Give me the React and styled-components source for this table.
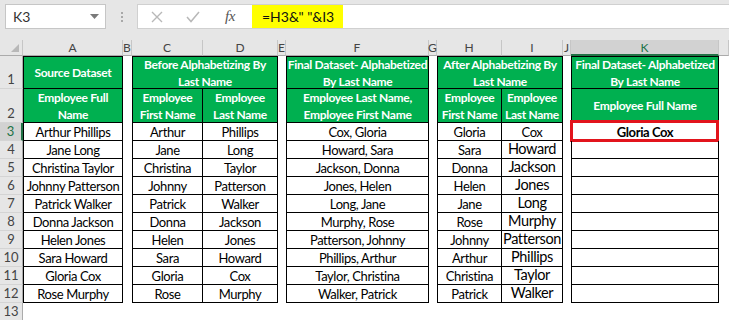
import React from 'react';
import styled, { createGlobalStyle, css } from 'styled-components';

const GREEN = '#00b050';

const GlobalStyle = createGlobalStyle`
  html, body { margin: 0; padding: 0; background: #fff; }
  body {
    width: 729px;
    height: 320px;
    overflow: hidden;
    font-family: Lato, "Open Sans", Arial, sans-serif;
  }
`;

const Toolbar = styled.div`
  height: 40px;
  box-sizing: border-box;
  background: #e6e6e6;
  display: flex;
  align-items: flex-start;
  padding: 4px 0 0 5px;
`;

const NameBox = styled.div`
  width: 101px;
  height: 25px;
  box-sizing: border-box;
  background: #fff;
  border: 1px solid #c6c6c6;
  display: flex;
  align-items: center;
  justify-content: space-between;
  padding: 0 6px 0 7px;
  font-size: 14px;
  color: #333;
`;

const Dots = styled.div`
  width: 31px;
  height: 25px;
  display: flex;
  flex-direction: column;
  align-items: center;
  justify-content: center;
  gap: 2px;
  span {
    width: 2px;
    height: 2px;
    background: #a8a8a8;
  }
`;

const FormulaBox = styled.div`
  flex: 1;
  height: 25px;
  box-sizing: border-box;
  background: #fff;
  border: 1px solid #d0d0d0;
  border-right: none;
  display: flex;
  align-items: flex-start;
`;

const IconArea = styled.div`
  width: 114px;
  height: 23px;
  display: flex;
  align-items: center;
  padding-left: 10px;
  box-sizing: border-box;
`;

const IconSlot = styled.div`
  width: ${p => p.$w}px;
  display: flex;
  align-items: center;
  justify-content: center;
`;

const Fx = styled.span`
  font-family: "Liberation Serif", serif;
  font-style: italic;
  font-size: 15px;
  color: #555;
  letter-spacing: -0.5px;
`;

const Formula = styled.div`
  width: 91px;
  height: 23px;
  background: #ffff00;
  display: flex;
  align-items: center;
  padding-left: 10px;
  box-sizing: border-box;
  font-size: 14px;
  color: #111;
  white-space: pre;
`;

const Sheet = styled.div`
  display: grid;
  grid-template-columns: 23px 100px 9px 71px 75px 8px 143px 8px 65px 61px 8px 148px 1fr;
  grid-template-rows: 16px 33px 34px repeat(11, 18px);
`;

const Corner = styled.div`
  grid-column: 1;
  grid-row: 1;
  background: #e6e6e6;
  border-right: 1px solid #c6c6c6;
  border-bottom: 1px solid #ababab;
  box-sizing: border-box;
  display: flex;
  align-items: flex-end;
  justify-content: flex-end;
  padding: 0 3px 3px 0;
`;

const ColHead = styled.div`
  grid-column: ${p => p.$col};
  grid-row: 1;
  box-sizing: border-box;
  background: ${p => (p.$active ? '#d2d2d2' : '#e6e6e6')};
  border-right: 1px solid #c6c6c6;
  border-bottom: ${p => (p.$active ? `2px solid #217346` : '1px solid #ababab')};
  color: ${p => (p.$active ? '#217346' : '#444')};
  font-size: 12px;
  display: flex;
  align-items: center;
  justify-content: center;
  line-height: 1;
  padding-top: 1px;
`;

const RowHead = styled.div`
  grid-column: 1;
  grid-row: ${p => p.$row};
  box-sizing: border-box;
  background: ${p => (p.$active ? '#d2d2d2' : '#e6e6e6')};
  border-right: ${p => (p.$active ? `2px solid #217346` : '1px solid #ababab')};
  border-bottom: 1px solid #d4d4d4;
  color: ${p => (p.$active ? '#217346' : '#444')};
  font-size: 13px;
  display: flex;
  align-items: flex-end;
  justify-content: center;
  padding-bottom: 2px;
  line-height: 1;
`;

const Cell = styled.div`
  grid-column: ${p => p.$col} / span ${p => p.$span || 1};
  grid-row: ${p => p.$row};
  position: relative;
  box-sizing: border-box;
  border-right: 1px solid #000;
  border-bottom: 1px solid #000;
  ${p => p.$first && css`border-left: 1px solid #000;`}
  ${p => p.$row === 2 && css`border-top: 1px solid #000;`}
  display: flex;
  align-items: center;
  justify-content: center;
  text-align: center;
  padding-top: 1px;
  font-size: 13px;
  letter-spacing: -0.4px;
  line-height: 16px;
  color: #000;
  white-space: nowrap;
  ${p => p.$head && css`
    background: ${GREEN};
    color: #fff;
    font-weight: 700;
    font-size: 12px;
    letter-spacing: -0.3px;
    line-height: 17px;
    padding-top: 0;
    flex-direction: column;
  `}
  ${p => p.$bold && css`font-weight: 700;`}
  ${p => p.$big && css`
    font-size: 14.5px;
    align-items: flex-start;
    padding-top: 0;
    line-height: 15px;
  `}
`;

const Selection = styled.div`
  position: absolute;
  top: -3px;
  bottom: -2px;
  left: -2px;
  right: -1px;
  border: 3px solid #e2141c;
  pointer-events: none;
`;

const source = [
  ['Arthur', 'Phillips'],
  ['Jane', 'Long'],
  ['Christina', 'Taylor'],
  ['Johnny', 'Patterson'],
  ['Patrick', 'Walker'],
  ['Donna', 'Jackson'],
  ['Helen', 'Jones'],
  ['Sara', 'Howard'],
  ['Gloria', 'Cox'],
  ['Rose', 'Murphy'],
];

const sorted = [...source].sort((a, b) => a[1].localeCompare(b[1]));

const columns = [
  ['A', 2], ['B', 3], ['C', 4], ['D', 5], ['E', 6], ['F', 7],
  ['G', 8], ['H', 9], ['I', 10], ['J', 11], ['K', 12],
];

const Cross = () => (
  <svg width="12" height="12" viewBox="0 0 12 12">
    <path d="M1 1 L11 11 M11 1 L1 11" stroke="#b8b8b8" strokeWidth="1.4" fill="none" />
  </svg>
);

const Check = () => (
  <svg width="14" height="12" viewBox="0 0 14 12">
    <path d="M1 6 L5 10.5 L13 1" stroke="#b8b8b8" strokeWidth="1.5" fill="none" />
  </svg>
);

const Caret = () => (
  <svg width="9" height="5" viewBox="0 0 9 5">
    <path d="M0 0 L9 0 L4.5 5 Z" fill="#7a7a7a" />
  </svg>
);

const SelectAll = () => (
  <svg width="8" height="8" viewBox="0 0 8 8">
    <path d="M8 0 L8 8 L0 8 Z" fill="#b8b8b8" />
  </svg>
);

// header text, wrapped the way the sheet wraps it
const Head = ({ lines, ...props }) => (
  <Cell $head {...props}>
    {lines.map(l => <span key={l}>{l}</span>)}
  </Cell>
);

export default function App() {
  const rows = [];
  for (let r = 2; r <= 14; r++) rows.push(r);

  return (
    <>
      <GlobalStyle />
      <Toolbar>
        <NameBox>
          K3
          <Caret />
        </NameBox>
        <Dots><span /><span /><span /></Dots>
        <FormulaBox>
          <IconArea>
            <IconSlot $w={18}><Cross /></IconSlot>
            <IconSlot $w={54}><Check /></IconSlot>
            <IconSlot $w={20}><Fx>fx</Fx></IconSlot>
          </IconArea>
          <Formula>=H3&amp;" "&amp;I3</Formula>
        </FormulaBox>
      </Toolbar>

      <Sheet>
        <Corner><SelectAll /></Corner>
        {columns.map(([name, col]) => (
          <ColHead key={name} $col={col} $active={name === 'K'}>{name}</ColHead>
        ))}
        <ColHead $col={13} />

        {rows.map(r => (
          <RowHead key={r} $row={r} $active={r === 4}>{r - 1}</RowHead>
        ))}

        {/* Source dataset */}
        <Head $col={2} $row={2} $first lines={['Source Dataset']} />
        <Head $col={2} $row={3} $first lines={['Employee Full', 'Name']} />
        {source.map(([f, l], i) => (
          <Cell key={'a' + i} $col={2} $row={i + 4} $first>{f} {l}</Cell>
        ))}

        {/* Before alphabetizing */}
        <Head $col={4} $span={2} $row={2} $first lines={['Before Alphabetizing By', 'Last Name']} />
        <Head $col={4} $row={3} $first lines={['Employee', 'First Name']} />
        <Head $col={5} $row={3} lines={['Employee', 'Last Name']} />
        {source.map(([f, l], i) => (
          <React.Fragment key={'cd' + i}>
            <Cell $col={4} $row={i + 4} $first>{f}</Cell>
            <Cell $col={5} $row={i + 4}>{l}</Cell>
          </React.Fragment>
        ))}

        {/* Final dataset, last-first */}
        <Head $col={7} $row={2} $first lines={['Final Dataset- Alphabetized', 'By Last Name']} />
        <Head $col={7} $row={3} $first lines={['Employee Last Name,', 'Employee First Name']} />
        {sorted.map(([f, l], i) => (
          <Cell key={'f' + i} $col={7} $row={i + 4} $first>{l}, {f}</Cell>
        ))}

        {/* After alphabetizing */}
        <Head $col={9} $span={2} $row={2} $first lines={['After Alphabetizing By', 'Last Name']} />
        <Head $col={9} $row={3} $first lines={['Employee', 'First Name']} />
        <Head $col={10} $row={3} lines={['Employee', 'Last Name']} />
        {sorted.map(([f, l], i) => (
          <React.Fragment key={'hi' + i}>
            <Cell $col={9} $row={i + 4} $first>{f}</Cell>
            <Cell $col={10} $row={i + 4} $big={i > 0}>{l}</Cell>
          </React.Fragment>
        ))}

        {/* Final full name */}
        <Head $col={12} $row={2} $first lines={['Final Dataset- Alphabetized', 'By Last Name']} />
        <Head $col={12} $row={3} $first lines={['Employee Full Name']} />
        <Cell $col={12} $row={4} $first $bold>
          Gloria Cox
          <Selection />
        </Cell>
        {sorted.slice(1).map((_, i) => (
          <Cell key={'k' + i} $col={12} $row={i + 5} $first />
        ))}
      </Sheet>
    </>
  );
}
